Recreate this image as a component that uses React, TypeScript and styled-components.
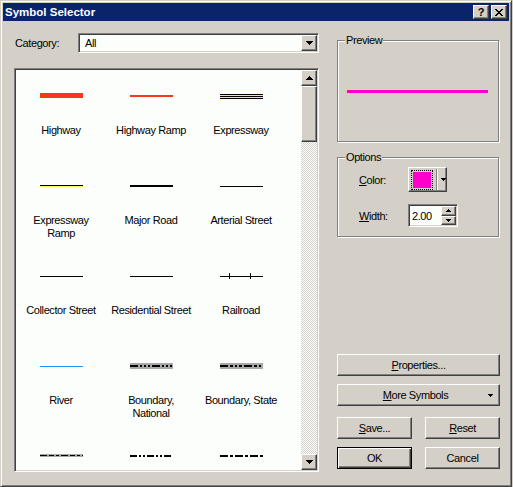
import React from "react";
import styled, { createGlobalStyle, css } from "styled-components";

const GlobalStyle = createGlobalStyle`
  html, body { margin: 0; padding: 0; background: #d4d0c8; }
  body { font-family: "Liberation Sans", Arial, sans-serif; font-size: 11px; color: #000; }
  * { box-sizing: border-box; }
`;

const raised = css`
  border: 1px solid;
  border-color: #fff #404040 #404040 #fff;
  box-shadow: inset -1px -1px 0 #808080, inset 1px 1px 0 #d4d0c8;
  background: #d4d0c8;
`;

const sunken = css`
  border: 1px solid;
  border-color: #808080 #fff #fff #808080;
  box-shadow: inset 1px 1px 0 #404040, inset -1px -1px 0 #d4d0c8;
`;

const Window = styled.div`
  width: 512px;
  height: 487px;
  background: #d4d0c8;
  border: 1px solid;
  border-color: #d4d0c8 #404040 #404040 #d4d0c8;
  box-shadow: inset 1px 1px 0 #fff, inset -1px -1px 0 #808080;
  padding: 2px;
  display: flex;
  flex-direction: column;
  font-family: "Liberation Sans", Arial, sans-serif;
  font-size: 11px;
  letter-spacing: -0.4px;
`;

const TitleBar = styled.div`
  height: 18px;
  flex: none;
  background: #0a246a;
  display: flex;
  align-items: center;
  padding: 0 2px;
  color: #fff;
`;

const TitleText = styled.div`
  font-weight: bold;
  font-size: 11.5px;
  letter-spacing: 0;
  flex: 1;
  line-height: 18px;
`;

const CaptionButtons = styled.div`
  display: flex;
  gap: 2px;
`;

const CaptionButton = styled.div`
  ${raised};
  width: 16px;
  height: 14px;
  display: flex;
  align-items: center;
  justify-content: center;
  color: #000;
  font-weight: bold;
  font-size: 11px;
  letter-spacing: 0;
  line-height: 12px;
`;

const Body = styled.div`
  flex: 1;
  display: flex;
  gap: 18px;
  padding: 12px 9px 12px 11px;
  min-height: 0;
`;

const LeftColumn = styled.div`
  width: 305px;
  display: flex;
  flex-direction: column;
`;

const CategoryRow = styled.div`
  height: 20px;
  display: flex;
  align-items: center;
  padding-left: 1px;
`;

const Combo = styled.div`
  ${sunken};
  margin-left: auto;
  width: 241px;
  height: 20px;
  padding: 1px;
  background: #fcfefc;
  display: flex;
  align-items: center;
`;

const ComboText = styled.div`
  flex: 1;
  padding-left: 5px;
`;

const ArrowButton = styled.div<{ $h?: number }>`
  ${raised};
  width: 16px;
  height: ${(p) => p.$h ?? 16}px;
  flex: none;
  display: flex;
  align-items: center;
  justify-content: center;
`;

const ListBox = styled.div`
  ${sunken};
  margin-top: 15px;
  height: 404px;
  padding: 1px;
  background: #fcfefc;
  display: flex;
  overflow: hidden;
`;

const SymbolGrid = styled.div`
  flex: 1;
  display: grid;
  grid-template-columns: repeat(3, 90px);
  grid-auto-rows: 90px;
  align-content: start;
  overflow: hidden;
`;

const SymbolCell = styled.div`
  display: flex;
  flex-direction: column;
  align-items: center;
`;

const SymbolSwatch = styled.div`
  height: 54px;
  width: 43px;
  padding-top: 20px;
  flex: none;
  svg { display: block; }
`;

const SymbolLabel = styled.div`
  line-height: 13px;
  text-align: center;
  white-space: pre-line;
`;

const Scrollbar = styled.div`
  width: 16px;
  flex: none;
  display: flex;
  flex-direction: column;
`;

const Track = styled.div`
  flex: 1;
  background-color: #fff;
  background-image: repeating-conic-gradient(#d4d0c8 0 25%, #fff 0 50%);
  background-size: 2px 2px;
`;

const Thumb = styled.div`
  ${raised};
  height: 56px;
`;

const RightColumn = styled.div`
  width: 163px;
  display: flex;
  flex-direction: column;
`;

const GroupFrame = styled.div<{ $top: number; $height: number }>`
  position: relative;
  margin-top: ${(p) => p.$top}px;
  margin-right: 1px;
  height: ${(p) => p.$height}px;
  border: 1px solid #808080;
  box-shadow: 1px 1px 0 #fff, inset 1px 1px 0 #fff;
  flex: none;
`;

const GroupTitle = styled.span`
  position: absolute;
  top: -7px;
  left: 7px;
  padding: 0 1px;
  line-height: 13px;
  background: #d4d0c8;
`;

const PreviewArea = styled.div`
  height: 100%;
  display: flex;
  align-items: center;
  padding-left: 9px;
`;

const PreviewLine = styled.div`
  width: 141px;
  height: 3px;
  background: #ff00cc;
`;

const OptionsGrid = styled.div`
  display: grid;
  grid-template-columns: 49px auto;
  row-gap: 12px;
  align-items: center;
  justify-content: start;
  padding: 9px 0 0 21px;
`;

const ColorButton = styled.div`
  ${raised};
  width: 39px;
  height: 25px;
  padding-left: 2px;
  display: flex;
  align-items: center;
`;

const FocusRect = styled.div`
  border: 1px dotted #000;
  padding: 1px;
`;

const Swatch = styled.div<{ $color: string }>`
  width: 18px;
  height: 16px;
  background: ${(p) => p.$color};
`;

const Separator = styled.div`
  width: 2px;
  height: 21px;
  margin: 0 3px;
  border-left: 1px solid #808080;
  border-right: 1px solid #fff;
`;

const SpinBox = styled.div`
  ${sunken};
  width: 50px;
  height: 23px;
  padding: 1px;
  background: #fcfefc;
  display: flex;
  align-items: center;
`;

const SpinText = styled.div`
  flex: 1;
  padding-left: 2px;
`;

const SpinButtons = styled.div`
  width: 15px;
  height: 100%;
  display: flex;
  flex-direction: column;
`;

const SpinButton = styled.div`
  ${raised};
  flex: 1;
  display: flex;
  align-items: center;
  justify-content: center;
`;

const ButtonStack = styled.div`
  margin-top: auto;
  padding-bottom: 3px;
  display: flex;
  flex-direction: column;
`;

const ButtonRow = styled.div<{ $gap: number }>`
  display: flex;
  justify-content: space-between;
  margin-top: ${(p) => p.$gap}px;
`;

const PushButton = styled.div<{ $width?: number; $default?: boolean; $gap?: number }>`
  ${raised};
  width: ${(p) => (p.$width ? `${p.$width}px` : "100%")};
  height: 22px;
  margin-top: ${(p) => p.$gap ?? 0}px;
  display: flex;
  align-items: center;
  justify-content: center;
  ${(p) =>
    p.$default &&
    css`
      border: 1px solid #000;
      box-shadow: inset 1px 1px 0 #fff, inset -1px -1px 0 #404040, inset -2px -2px 0 #808080;
    `}
`;

const MenuButton = styled(PushButton)`
  display: grid;
  grid-template-columns: 1fr auto 1fr;
  align-items: center;
  padding-right: 6px;
`;

const MenuArrow = styled.span`
  justify-self: end;
  display: flex;
`;

const Arrow = ({ dir = "down", w = 7 }: { dir?: "up" | "down"; w?: number }) => {
  const h = Math.ceil(w / 2);
  const pts = dir === "down" ? `0,0 ${w},0 ${w / 2},${h}` : `0,${h} ${w},${h} ${w / 2},0`;
  return (
    <svg width={w} height={h} viewBox={`0 0 ${w} ${h}`} shapeRendering="crispEdges">
      <polygon points={pts} fill="#000" />
    </svg>
  );
};

const RED = "#f83818";
const YEL = "#f8f060";
const GRAY = "#a8a8a8";

type Sym = { label: string; art: React.ReactNode };

const bar = (y: number, h: number, fill = "#000") => <rect x={0} y={y} width={43} height={h} fill={fill} />;
const dash = (y: number, w: number, d: string) => (
  <line x1={0} y1={y} x2={43} y2={y} stroke="#000" strokeWidth={w} strokeDasharray={d} />
);

const symbols: Sym[] = [
  { label: "Highway", art: bar(3, 5, RED) },
  { label: "Highway Ramp", art: bar(5, 2, RED) },
  {
    label: "Expressway",
    art: (
      <>
        {bar(4, 1)}
        {bar(5, 1, YEL)}
        {bar(6, 1)}
        {bar(7, 1, YEL)}
        {bar(8, 1)}
      </>
    ),
  },
  {
    label: "Expressway\nRamp",
    art: (
      <>
        {bar(5, 1)}
        {bar(6, 1, YEL)}
      </>
    ),
  },
  { label: "Major Road", art: bar(5, 2) },
  { label: "Arterial Street", art: bar(6, 1) },
  { label: "Collector Street", art: bar(6, 1) },
  { label: "Residential Street", art: bar(6, 1) },
  {
    label: "Railroad",
    art: (
      <>
        {bar(6, 1)}
        <rect x={9} y={3} width={1} height={6} fill="#000" />
        <rect x={30} y={3} width={1} height={6} fill="#000" />
      </>
    ),
  },
  { label: "River", art: bar(6, 1, "#1c94f8") },
  {
    label: "Boundary,\nNational",
    art: (
      <>
        {bar(3, 6, GRAY)}
        {dash(6, 2, "8 2 2 2 2 2 2 2")}
      </>
    ),
  },
  {
    label: "Boundary, State",
    art: (
      <>
        {bar(3, 6, GRAY)}
        {dash(6, 2, "8 2 3 2 2 2 3 2")}
      </>
    ),
  },
  {
    label: "",
    art: (
      <>
        {bar(4, 3, GRAY)}
        {dash(5.5, 1, "7 2 5 2 3 2")}
      </>
    ),
  },
  { label: "", art: dash(6, 2, "7 2 2 2 2 2") },
  { label: "", art: dash(6, 2, "8 2 3 2") },
];

export default function App() {
  return (
    <>
      <GlobalStyle />
      <Window>
        <TitleBar>
          <TitleText>Symbol Selector</TitleText>
          <CaptionButtons>
            <CaptionButton>?</CaptionButton>
            <CaptionButton>
              <svg width="8" height="7" viewBox="0 0 8 7" shapeRendering="crispEdges">
                <path d="M0 0h2l2 2.2L6 0h2L5 3.5 8 7H6L4 4.8 2 7H0l3-3.5z" fill="#000" />
              </svg>
            </CaptionButton>
          </CaptionButtons>
        </TitleBar>
        <Body>
          <LeftColumn>
            <CategoryRow>
              <span>Category:</span>
              <Combo>
                <ComboText>All</ComboText>
                <ArrowButton>
                  <Arrow />
                </ArrowButton>
              </Combo>
            </CategoryRow>
            <ListBox>
              <SymbolGrid>
                {symbols.map((s, i) => (
                  <SymbolCell key={i}>
                    <SymbolSwatch>
                      <svg width="43" height="12" viewBox="0 0 43 12" shapeRendering="crispEdges">
                        {s.art}
                      </svg>
                    </SymbolSwatch>
                    {s.label && <SymbolLabel>{s.label}</SymbolLabel>}
                  </SymbolCell>
                ))}
              </SymbolGrid>
              <Scrollbar>
                <ArrowButton>
                  <Arrow dir="up" />
                </ArrowButton>
                <Thumb />
                <Track />
                <ArrowButton>
                  <Arrow />
                </ArrowButton>
              </Scrollbar>
            </ListBox>
          </LeftColumn>
          <RightColumn>
            <GroupFrame $top={7} $height={102}>
              <GroupTitle>Preview</GroupTitle>
              <PreviewArea>
                <PreviewLine />
              </PreviewArea>
            </GroupFrame>
            <GroupFrame $top={15} $height={80}>
              <GroupTitle>Options</GroupTitle>
              <OptionsGrid>
                <span>
                  <u>C</u>olor:
                </span>
                <ColorButton>
                  <FocusRect>
                    <Swatch $color="#ff00cc" />
                  </FocusRect>
                  <Separator />
                  <Arrow w={5} />
                </ColorButton>
                <span>
                  <u>W</u>idth:
                </span>
                <SpinBox>
                  <SpinText>2.00</SpinText>
                  <SpinButtons>
                    <SpinButton>
                      <Arrow dir="up" w={5} />
                    </SpinButton>
                    <SpinButton>
                      <Arrow w={5} />
                    </SpinButton>
                  </SpinButtons>
                </SpinBox>
              </OptionsGrid>
            </GroupFrame>
            <ButtonStack>
              <PushButton>
                <span>
                  <u>P</u>roperties...
                </span>
              </PushButton>
              <MenuButton $gap={8}>
                <span />
                <span>
                  <u>M</u>ore Symbols
                </span>
                <MenuArrow>
                  <Arrow w={5} />
                </MenuArrow>
              </MenuButton>
              <ButtonRow $gap={11}>
                <PushButton $width={75}>
                  <span>
                    <u>S</u>ave...
                  </span>
                </PushButton>
                <PushButton $width={75}>
                  <span>
                    <u>R</u>eset
                  </span>
                </PushButton>
              </ButtonRow>
              <ButtonRow $gap={8}>
                <PushButton $width={75} $default>
                  OK
                </PushButton>
                <PushButton $width={75}>Cancel</PushButton>
              </ButtonRow>
            </ButtonStack>
          </RightColumn>
        </Body>
      </Window>
    </>
  );
}
